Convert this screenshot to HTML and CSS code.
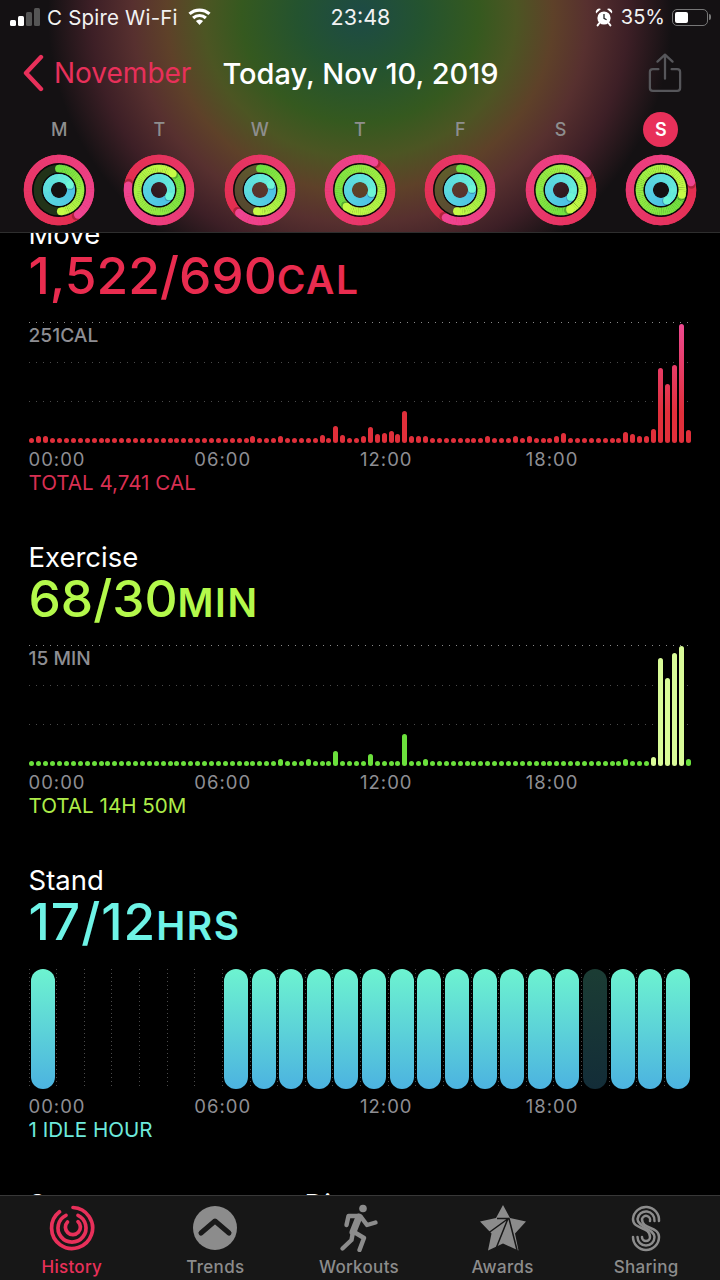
FILE: index.html
```html
<!DOCTYPE html>
<html lang="en">
<head>
    <meta charset="UTF-8">
    <meta name="viewport" content="width=device-width, initial-scale=1.0">
    <title>Activity History</title>
    <link rel="stylesheet" href="styles.css">
</head>
<body>
    <header class="top">
        <div class="status">
            <div class="status-left">
                <div class="signal"><i class="on s1"></i><i class="on s2"></i><i class="s3"></i><i class="s4"></i></div>
                <span class="carrier">C Spire Wi-Fi</span>
                <svg class="wifi" width="27" height="18" viewBox="0 0 27 18">
                    <path d="M3.5 5.85A15 15 0 0 1 23.5 5.85M7.14 9.94A9.5 9.5 0 0 1 19.86 9.94" fill="none" stroke="#fff" stroke-width="3.2"/>
                    <path d="M13.5 17L9.9 13A5.4 5.4 0 0 1 17.1 13Z" fill="#fff"/>
                </svg>
            </div>
            <div class="status-time">23:48</div>
            <div class="status-right">
                <svg width="18" height="20" viewBox="0 0 18 20">
                    <circle cx="9" cy="11" r="6.6" fill="#fff"/>
                    <path d="M1 6.5A3.6 3.6 0 0 1 6 2ZM17 6.5A3.6 3.6 0 0 0 12 2Z" fill="#fff"/>
                    <path d="M4.4 16L2.6 18.4M13.6 16L15.4 18.4" stroke="#fff" stroke-width="2" stroke-linecap="round"/>
                    <path d="M9 7V11.4L11.6 12.8" fill="none" stroke="#222" stroke-width="1.3"/>
                </svg>
                <span>35%</span>
                <div class="battery"><div class="battery-fill"></div></div>
                <div class="battery-nub"></div>
            </div>
        </div>
        <nav class="nav">
            <svg class="back" width="22" height="38" viewBox="0 0 22 38">
                <path d="M19 3L4 19L19 35" fill="none" stroke="#e8305a" stroke-width="4.4" stroke-linecap="round" stroke-linejoin="round"/>
            </svg>
            <span class="nav-back">November</span>
            <span class="nav-title">Today, Nov 10, 2019</span>
            <svg class="share" width="34" height="40" viewBox="0 0 36 42">
                <path d="M11 17H5A3 3 0 0 0 2 20V37A3 3 0 0 0 5 40H31A3 3 0 0 0 34 37V20A3 3 0 0 0 31 17H25M18 27V2M10 9L18 1.5L26 9" fill="none" stroke="#56565a" stroke-width="2.4" stroke-linecap="round" stroke-linejoin="round"/>
            </svg>
        </nav>
        <div class="week" id="week"></div>
    </header>

    <main class="content">
        <section class="metric">
            <h2>Move</h2>
            <div class="value move">1,522/690<small>CAL</small></div>
            <div class="chart">
                <div class="grid"><i></i><i></i><i></i></div>
                <div class="y-label">251CAL</div>
                <div class="bars" id="moveBars"></div>
            </div>
            <div class="axis"><span>00:00</span><span>06:00</span><span>12:00</span><span>18:00</span></div>
            <div class="total move-total">TOTAL 4,741 CAL</div>
        </section>

        <section class="metric">
            <h2>Exercise</h2>
            <div class="value exercise">68/30<small>MIN</small></div>
            <div class="chart">
                <div class="grid"><i></i><i></i><i></i></div>
                <div class="y-label">15 MIN</div>
                <div class="bars" id="exerciseBars"></div>
            </div>
            <div class="axis"><span>00:00</span><span>06:00</span><span>12:00</span><span>18:00</span></div>
            <div class="total exercise-total">TOTAL 14H 50M</div>
        </section>

        <section class="metric">
            <h2>Stand</h2>
            <div class="value stand">17/12<small>HRS</small></div>
            <div class="stand-chart" id="standBars"></div>
            <div class="axis stand-axis"><span>00:00</span><span>06:00</span><span>12:00</span><span>18:00</span></div>
            <div class="total stand-total">1 IDLE HOUR</div>
        </section>

        <section class="split">
            <h2>Steps</h2>
            <h2>Distance</h2>
        </section>
    </main>

    <footer class="tabs">
        <div class="tab active">
            <svg width="48" height="48" viewBox="-24 -24 48 48" fill="none" stroke="#e8305a" stroke-width="3.7" stroke-linecap="round">
                <path d="M1 -20.5A20.5 20.5 0 1 1 -12.5 -16.2"/>
                <path d="M-6 -12.6A14 14 0 1 0 6 -12.6"/>
                <path d="M6 -6.3A7.5 7.5 0 1 1 -4.5 -6"/>
            </svg>
            <span>History</span>
        </div>
        <div class="tab">
            <svg width="48" height="48" viewBox="-24 -24 48 48">
                <circle r="22" fill="#8c8c8c"/>
                <path d="M-14 5L0 -7L14 5" fill="none" stroke="#1a1a1a" stroke-width="5" stroke-linecap="round" stroke-linejoin="round"/>
            </svg>
            <span>Trends</span>
        </div>
        <div class="tab">
            <svg width="48" height="48" viewBox="0 0 48 48" fill="none" stroke="#8c8c8c" stroke-width="4.4" stroke-linecap="round" stroke-linejoin="round">
                <circle cx="28" cy="4.5" r="3.8" fill="#8c8c8c" stroke="none"/>
                <path d="M24 13L18 28" stroke-width="7"/>
                <path d="M24 12H13.5L11.5 21"/>
                <path d="M26 13L32 21L40.5 18.5"/>
                <path d="M18 28L16.5 36L7.5 44.5"/>
                <path d="M19 28L29 34L24.5 46"/>
            </svg>
            <span>Workouts</span>
        </div>
        <div class="tab">
            <svg width="50" height="48" viewBox="0 0 50 48">
                <path d="M25 1L32 14L48 17.5L37 29.5L40.5 46.5L25 39.5L10 46.5L13.5 29.5L2 17.5L18 14Z" fill="#8c8c8c"/>
                <path d="M19 14.5H31.5M31 14L9 30M30 14.5L17 47M31 14.5L39 46" fill="none" stroke="#171717" stroke-width="1.5"/>
            </svg>
            <span>Awards</span>
        </div>
        <div class="tab">
            <svg width="32" height="48" viewBox="-16 -24 32 48" fill="none" stroke="#8c8c8c" stroke-width="2.5" stroke-linecap="round">
                <path d="M13 -7A13 13 0 0 0 -13 -9C-13 2 4 -2 4 9A4 4 0 0 1 -4 9"/>
                <path d="M8.5 -7A8.5 8.5 0 0 0 -8.5 -9C-8.5 -1 8.5 1 8.5 9A8.5 8.5 0 0 1 -8.5 9"/>
                <path d="M4 -7A4 4 0 0 0 -4 -9C-4 2 13 -2 13 9A13 13 0 0 1 -13 9"/>
            </svg>
            <span>Sharing</span>
        </div>
    </footer>

    <script src="charts.js"></script>
</body>
</html>
```

FILE: styles.css
```css
* {
    box-sizing: border-box;
}

html, body {
    height: 100%;
}

body {
    margin: 0;
    height: 1280px;
    display: flex;
    flex-direction: column;
    overflow: hidden;
    background-color: #000;
    color: #fff;
    font-family: Inter, "Liberation Sans", sans-serif;
}

/* header */
.top {
    height: 233px;
    flex: none;
    position: relative;
    z-index: 2;
    border-bottom: 1px solid #2e2e2e;
    background-color: #111;
    background-image: radial-gradient(ellipse 312px 285px at 360px 15px,
        #1d4a46 0%, #24532f 20%, #35591f 38%, #4c5523 50%, #5e4129 62%, #57302f 73%, #3d1f26 86%, #141113 100%);
}

.status {
    height: 34px;
    padding: 0 9px 0 10px;
    display: grid;
    grid-template-columns: 1fr auto 1fr;
    align-items: center;
    font-size: 20.5px;
    color: #f2f2f2;
}

.carrier {
    letter-spacing: 0.2px;
}

.status-time {
    font-size: 21.5px;
}

.status-left,
.status-right {
    display: flex;
    align-items: center;
}

.status-right {
    justify-content: flex-end;
}

.status-right span {
    margin: 0 7px 0 8px;
    font-size: 20px;
}

.signal {
    width: 30px;
    height: 18px;
    margin-right: 7px;
    display: flex;
    align-items: flex-end;
    gap: 2px;
}

.signal i {
    width: 6px;
    border-radius: 1.5px;
    background-color: #555;
}

.signal .on {
    background-color: #fff;
}

.s1 { height: 6px; }
.s2 { height: 10px; }
.s3 { height: 14px; }
.s4 { height: 18px; }

.wifi {
    margin-left: 8px;
}

.battery {
    width: 36px;
    height: 17px;
    padding: 2px;
    border: 1.5px solid #777;
    border-radius: 5px;
}

.battery-fill {
    width: 13px;
    height: 100%;
    border-radius: 2px;
    background-color: #fff;
}

.battery-nub {
    width: 2px;
    height: 6px;
    margin-left: 1px;
    border-radius: 0 2px 2px 0;
    background-color: #777;
}

.nav {
    height: 78px;
    padding: 0 38px 0 22px;
    display: flex;
    align-items: center;
    font-size: 28px;
}

.nav-back {
    margin-left: 10px;
    color: #e8305a;
}

.nav-title {
    margin-left: 31px;
    font-size: 29px;
    font-weight: 500;
}

.share {
    margin-left: auto;
}

.week {
    padding: 0 9px;
    display: grid;
    grid-template-columns: repeat(7, 1fr);
}

.day {
    display: flex;
    flex-direction: column;
    align-items: center;
    gap: 7px;
}

.day-letter {
    width: 35px;
    height: 35px;
    border-radius: 50%;
    display: flex;
    align-items: center;
    justify-content: center;
    font-size: 18px;
    font-weight: 500;
    color: #8e8e8e;
}

.day-letter.today {
    background-color: #e8305a;
    color: #fff;
    font-weight: 600;
}

/* metric sections */
.content {
    flex: 1;
    min-height: 0;
    overflow: hidden;
}

.metric {
    padding: 0 28.5px 45.5px;
}

.metric:first-child {
    margin-top: -16px;
}

h2 {
    margin: 0;
    font-size: 27.5px;
    font-weight: 400;
    line-height: 34px;
}

.value {
    height: 52px;
    font-size: 51.4px;
    font-weight: 500;
    line-height: 48px;
}

.value small {
    font-size: 39px;
    font-weight: 600;
    letter-spacing: 1.5px;
}

.move { color: #e92c4f; }
.exercise { color: #b4f94b; }
.stand { color: #6ef3e6; letter-spacing: 1px; }

.chart {
    height: 121px;
    margin-top: 19px;
    position: relative;
}

.grid i {
    display: block;
    height: 1px;
    margin-bottom: 38.5px;
    background-image: repeating-linear-gradient(90deg, #4a4a4a 0 1px, transparent 1px 7px);
}

.grid i:first-child {
    background-image: repeating-linear-gradient(90deg, #8a8a8a 0 1px, transparent 1px 7px);
}

.y-label {
    position: absolute;
    top: 2px;
    left: 0;
    font-size: 19.2px;
    line-height: 22px;
    font-weight: 500;
    color: #8e8e93;
}

.bars {
    position: absolute;
    inset: 0;
    display: flex;
    align-items: flex-end;
}

.bar-col {
    flex: 1;
    display: flex;
    justify-content: center;
}

.bar {
    width: 5px;
    border-radius: 2.5px;
    background-repeat: no-repeat;
    background-position: bottom;
    background-size: 100% 121px;
}

.bar.red {
    background-image: linear-gradient(#ee4a92, #e02f3a 75%);
}

.bar.green {
    background-color: #6be03c;
}

.bar.pale {
    background-color: #d9fb98;
}

.stand-chart {
    height: 120px;
    margin-top: 20px;
    display: flex;
}

.stand-col {
    flex: 1;
    padding-left: 2px;
    background-image: repeating-linear-gradient(#4a4a4a 0 1px, transparent 1px 4px);
    background-size: 1px 118px;
    background-repeat: no-repeat;
}

.stand-bar {
    width: 24px;
    height: 100%;
    border-radius: 12px;
    background-image: linear-gradient(#6df3d0, #4cb3e0);
}

.stand-bar.idle {
    opacity: 0.25;
}

.axis {
    height: 24px;
    margin-top: 3.5px;
    display: grid;
    grid-template-columns: repeat(4, 1fr);
    font-size: 18.5px;
    letter-spacing: 1px;
    line-height: 24px;
    color: #8e8e93;
}

.stand-axis {
    margin-top: 4.5px;
}

.total {
    height: 24px;
    font-size: 20.6px;
    line-height: 24px;
}

.move-total { color: #d82f52; }
.exercise-total { color: #aeec49; }
.stand-total { color: #6ee9dc; }

.split {
    padding-left: 28.5px;
    display: grid;
    grid-template-columns: 276px 1fr;
}

/* tab bar */
.tabs {
    height: 85px;
    flex: none;
    position: relative;
    z-index: 2;
    padding-right: 2px;
    display: flex;
    border-top: 1px solid #383838;
    background-color: #171717;
}

.tab {
    flex: 1;
    padding-top: 8px;
    display: flex;
    flex-direction: column;
    align-items: center;
    font-size: 17px;
    font-weight: 500;
    letter-spacing: 0.3px;
    color: #8c8c8c;
}

.tab svg {
    height: 48px;
    flex: none;
}

.tab span {
    margin-top: 3px;
    line-height: 24px;
}

.tab.active {
    color: #e8305a;
}
```

FILE: charts.js
```js
// quarter-hour values, everything not listed is a plain dot
var moveData = { 1: 7, 2: 7, 32: 7, 36: 7, 42: 8, 44: 17, 45: 8, 48: 7, 49: 16, 50: 9, 51: 10, 52: 12, 53: 9, 54: 32,
    55: 7, 56: 7, 57: 7, 66: 7, 70: 7, 72: 7, 76: 7, 77: 10, 86: 11, 87: 9, 88: 7, 89: 7, 90: 14, 91: 75, 92: 59, 93: 78, 94: 119, 95: 13 };
var exerciseData = { 36: 7, 40: 7, 44: 15, 49: 12, 54: 32, 57: 7, 86: 7, 90: 9, 91: 108, 92: 88, 93: 113, 94: 120, 95: 7 };
var paleBars = [90, 91, 92, 93, 94];

function buildBars(id, data, barClass) {
    var box = document.getElementById(id);
    for (var i = 0; i < 96; i++) {
        var col = document.createElement('div');
        col.className = 'bar-col';
        var bar = document.createElement('div');
        var cls = barClass;
        if (barClass === 'green' && paleBars.indexOf(i) !== -1) cls = 'pale';
        bar.className = 'bar ' + cls;
        bar.style.height = (data[i] || 5) + 'px';
        col.appendChild(bar);
        box.appendChild(col);
    }
}

buildBars('moveBars', moveData, 'red');
buildBars('exerciseBars', exerciseData, 'green');

// stand hours: 0 = empty, 1 = stood, 2 = idle
var standHours = [1, 0, 0, 0, 0, 0, 0, 1, 1, 1, 1, 1, 1, 1, 1, 1, 1, 1, 1, 1, 2, 1, 1, 1];
var standBox = document.getElementById('standBars');
standHours.forEach(function(h) {
    var col = document.createElement('div');
    col.className = 'stand-col';
    if (h) {
        var bar = document.createElement('div');
        bar.className = h === 2 ? 'stand-bar idle' : 'stand-bar';
        col.appendChild(bar);
    }
    standBox.appendChild(col);
});

// rings: head angle of each ring, clockwise from the top
var days = [
    { l: 'M', o: 142, m: 175, mPart: true, i: 65 },
    { l: 'T', o: 278, m: 40, i: 122 },
    { l: 'W', o: 222, m: 188, mPart: true, i: 65 },
    { l: 'T', o: 27, m: 219, i: 105 },
    { l: 'F', o: 207, m: 188, mPart: true, i: 85 },
    { l: 'S', o: 57, m: 155, i: 125 },
    { l: 'S', o: 75, m: 103, i: 150, today: true }
];

function hex(c) {
    return [parseInt(c.substr(1, 2), 16), parseInt(c.substr(3, 2), 16), parseInt(c.substr(5, 2), 16)];
}

function mix(a, b, t) {
    var x = hex(a), y = hex(b);
    return 'rgb(' + x.map(function(v, n) { return Math.round(v + (y[n] - v) * t); }).join(',') + ')';
}

function pt(r, deg) {
    var a = deg * Math.PI / 180;
    return (r * Math.sin(a)).toFixed(2) + ' ' + (-r * Math.cos(a)).toFixed(2);
}

function dot(r, deg, size, fill, extra) {
    var p = pt(r, deg).split(' ');
    return '<circle cx="' + p[0] + '" cy="' + p[1] + '" r="' + size + '" fill="' + fill + '"' + (extra || '') + '/>';
}

function ring(r, w, head, part, c1, c2, track) {
    var start = part ? 0 : head - 360;
    var out = '<circle r="' + r + '" fill="none" stroke="' + track + '" stroke-width="' + w + '"/>';
    var seg = function(from, to) {
        var s = '';
        for (var a = from; a < to; a += 5) {
            var end = Math.min(a + 5.6, to);
            s += '<path d="M' + pt(r, a) + 'A' + r + ' ' + r + ' 0 0 1 ' + pt(r, end) + '" fill="none" stroke="' +
                mix(c1, c2, (a - start) / (head - start)) + '" stroke-width="' + w + '"/>';
        }
        return s;
    };
    out += seg(start, head - 20);
    if (part) {
        out += dot(r, 0, w / 2, c1);
    } else {
        out += dot(r, head + 5, w / 2, '#000', ' opacity="0.22"');
    }
    out += seg(head - 20, head) + dot(r, head, w / 2, c2);
    return out;
}

var week = document.getElementById('week');
days.forEach(function(d) {
    var svg = '<svg width="72" height="72" viewBox="-36 -36 72 72">' +
        ring(31, 8.4, d.o, false, '#e32e4e', '#ee4592', '#e32e4e') +
        '<circle r="26.2" fill="none" stroke="#0a0a0a" stroke-width="1.4"/>' +
        ring(21.4, 7.8, d.m, d.mPart, '#6ee040', '#c6fb46', 'rgba(110,230,60,0.16)') +
        '<circle r="16.6" fill="none" stroke="#0a0a0a" stroke-width="1.4"/>' +
        ring(12, 7.8, d.i, false, '#4cbfe6', '#6df6d6', '#4cbfe6') +
        '</svg>';
    var el = document.createElement('div');
    el.className = 'day';
    el.innerHTML = '<div class="day-letter' + (d.today ? ' today' : '') + '">' + d.l + '</div>' + svg;
    week.appendChild(el);
});
```
